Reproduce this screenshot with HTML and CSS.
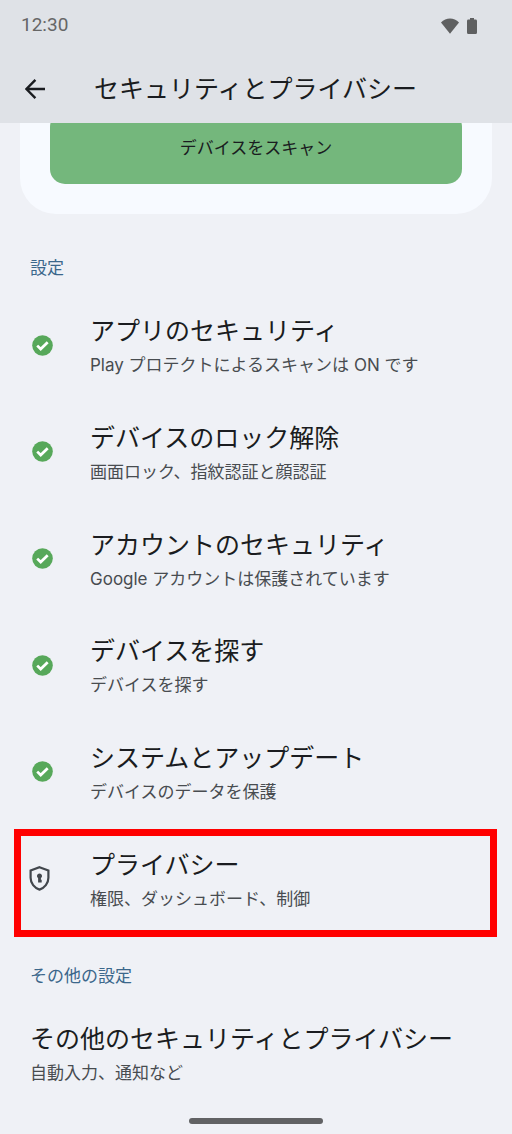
FILE: index.html
```html
<!DOCTYPE html>
<html lang="ja">
<head>
<meta charset="utf-8">
<meta name="viewport" content="width=device-width, initial-scale=1">
<title>セキュリティとプライバシー</title>
<link rel="stylesheet" href="styles.css">
</head>
<body>
<svg class="defs" aria-hidden="true">
  <symbol id="check" viewBox="0 0 21 21">
    <circle cx="10.5" cy="10.5" r="10.3" fill="#57a85a"/>
    <path d="M5.2 10.600 8.700 14 15.700 7.200" fill="none" stroke="#fff" stroke-width="2.700"/>
  </symbol>
</svg>
<div class="screen">
  <header class="top">
    <div class="status">
      <span class="time">12:30</span>
      <svg class="wifi" viewBox="0 0 18 16" aria-hidden="true"><path d="M0 4.6C5-1 13-1 18 4.6L9 15.7z"/></svg>
      <svg class="battery" viewBox="0 0 10 16" aria-hidden="true"><path d="M3 0h4v1.6h1.6Q10 1.6 10 3v11.4Q10 16 8.6 16H1.4Q0 16 0 14.4V3q0-1.4 1.4-1.4H3z"/></svg>
    </div>
    <div class="bar">
      <button class="back" type="button" aria-label="戻る">
        <svg viewBox="0 0 20 20" aria-hidden="true"><path d="M20 10H1.8M10.4 .9 1.4 10l9 9.1"/></svg>
      </button>
      <h1 class="heading">セキュリティとプライバシー</h1>
    </div>
  </header>
  <main class="content">
    <section class="card">
      <button class="scan" type="button">デバイスをスキャン</button>
    </section>
    <h2 class="section">設定</h2>
    <ul class="list">
      <li class="row"><a class="item" href="#apps"><svg class="icon" aria-hidden="true"><use href="#check"/></svg><span class="text"><span class="title">アプリのセキュリティ</span><span class="sub">Play プロテクトによるスキャンは ON です</span></span></a></li>
      <li class="row"><a class="item" href="#lock"><svg class="icon" aria-hidden="true"><use href="#check"/></svg><span class="text"><span class="title">デバイスのロック解除</span><span class="sub">画面ロック、指紋認証と顔認証</span></span></a></li>
      <li class="row"><a class="item" href="#account"><svg class="icon" aria-hidden="true"><use href="#check"/></svg><span class="text"><span class="title">アカウントのセキュリティ</span><span class="sub">Google アカウントは保護されています</span></span></a></li>
      <li class="row"><a class="item" href="#find"><svg class="icon" aria-hidden="true"><use href="#check"/></svg><span class="text"><span class="title">デバイスを探す</span><span class="sub">デバイスを探す</span></span></a></li>
      <li class="row"><a class="item" href="#system"><svg class="icon" aria-hidden="true"><use href="#check"/></svg><span class="text"><span class="title">システムとアップデート</span><span class="sub">デバイスのデータを保護</span></span></a></li>
      <li class="row marked"><a class="item" href="#privacy"><svg class="icon shield" viewBox="0 0 20 25" aria-hidden="true"><path class="outline" d="M10 1.2 18.9 4.5v7.2c0 5.600-3.800 10.300-8.900 11.900C4.900 22 1.100 17.300 1.100 11.700V4.500z"/><path class="key" d="M10 7.600a2.500 2.500 0 0 1 1.400 4.600v1.600h.8v2.800H8.600v-4.400A2.500 2.500 0 0 1 10 7.600z"/></svg><span class="text"><span class="title">プライバシー</span><span class="sub">権限、ダッシュボード、制御</span></span></a></li>
    </ul>
    <h2 class="section other">その他の設定</h2>
    <a class="item plain" href="#more"><span class="text"><span class="title">その他のセキュリティとプライバシー</span><span class="sub">自動入力、通知など</span></span></a>
  </main>
  <div class="nav"><span class="pill"></span></div>
</div>
</body>
</html>
```
FILE: styles.css
```css
* { box-sizing: border-box; }

body {
  margin: 0;
  background: #eff1f6;
  color: #1a1c20;
  font-family: Inter, "Noto Sans CJK JP", sans-serif;
}

h1, h2, ul { margin: 0; padding: 0; font-weight: 400; }
button { border: 0; font: inherit; color: inherit; cursor: pointer; }
.defs { position: absolute; width: 0; height: 0; }

.screen { display: flex; flex-direction: column; min-height: 100vh; }

.top { background: #dfe2e7; padding-bottom: 11px; }

.status {
  display: flex;
  align-items: center;
  gap: 8px;
  height: 48px;
  padding: 0 35px 0 21px;
  color: #666;
}
.time { margin-right: auto; font-family: Roboto, sans-serif; font-size: 19px; }
.status svg { fill: #5f6061; margin-top: 4px; }
.wifi { width: 18px; height: 16px; }
.battery { width: 10px; height: 16px; }

.bar { display: flex; align-items: center; height: 64px; padding: 18px 15px 0; }
.back { display: flex; padding: 10px; background: none; }
.back svg { width: 20px; height: 20px; fill: none; stroke: #1a1c20; stroke-width: 2.4; }
.heading { margin-left: 39px; font-size: 25px; line-height: 36px; white-space: nowrap; }

.content { overflow: hidden; }

.card {
  margin: 0 20px;
  padding: 0 30px 30px;
  border-radius: 0 0 36px 36px;
  background: #f7faff;
}
.scan {
  display: block;
  width: 100%;
  height: 72px;
  margin-top: -11px;
  padding-bottom: 4px;
  border-radius: 15px;
  background: #74b77c;
  font-size: 17px;
}

.section { margin: 40px 30px 0; color: #3b678b; font-size: 17px; line-height: 28px; }

.list { display: grid; grid-auto-rows: 1fr; min-height: 640px; margin-top: 10px; list-style: none; }
.row { position: relative; display: grid; }
.item { display: flex; align-items: center; gap: 37px; padding: 0 30px 0 32px; color: inherit; text-decoration: none; }
.icon { flex: none; width: 21px; height: 21px; }
.text { display: flex; flex-direction: column; min-width: 0; padding-top: 2px; }
.title { font-size: 25px; line-height: 38px; }
.sub { color: #484c50; font-size: 17px; line-height: 30px; }

.shield { height: 25px; }
.shield .outline { fill: none; stroke: #42474d; stroke-width: 2.2; }
.shield .key { fill: #42474d; }
.marked .item { padding-left: 29px; gap: 40px; }
.marked::after {
  content: "";
  position: absolute;
  inset: 4px 15px -5px 14px;
  border: 7px solid #f00;
  pointer-events: none;
}

.other { margin-top: 30px; }
.plain { padding: 28px 30px 0; }

.nav { display: flex; justify-content: center; margin-top: auto; padding: 8px 0 10px; }
.pill { width: 134px; height: 6px; border-radius: 3px; background: #616264; }
```
